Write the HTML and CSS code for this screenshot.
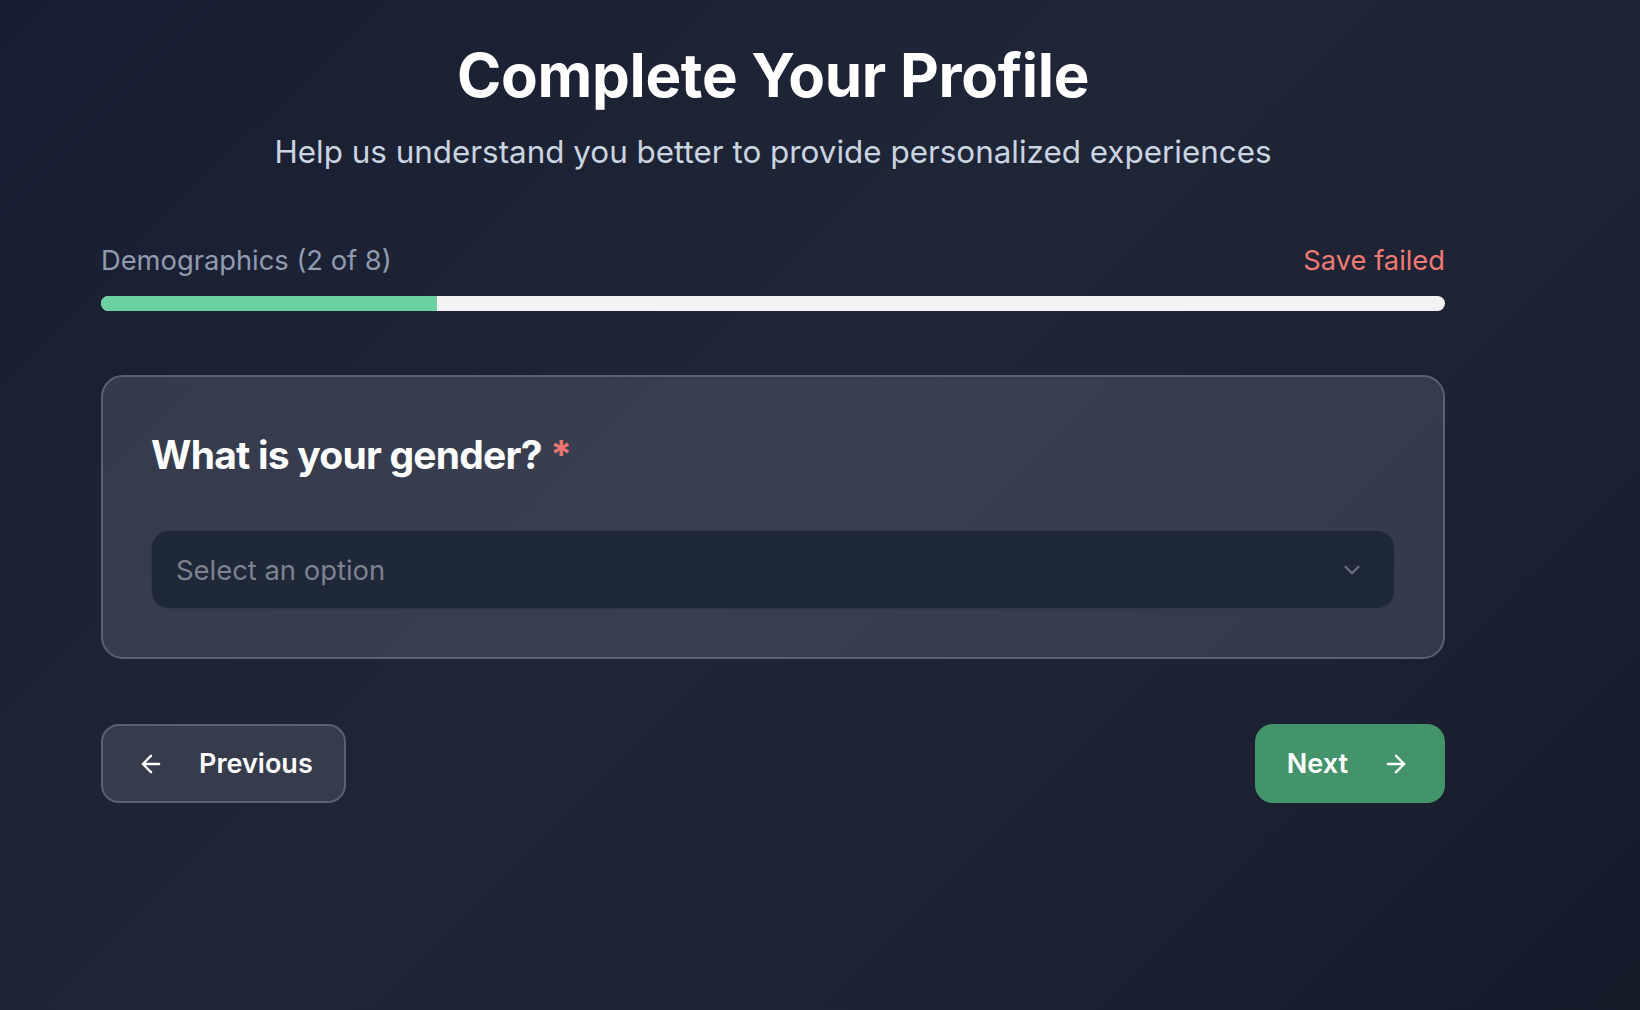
FILE: index.html
```html
<!DOCTYPE html>
<html lang="en">
<head>
<meta charset="utf-8">
<title>Complete Your Profile</title>
<link rel="stylesheet" href="styles.css">
</head>
<body>
<main class="page">
  <header class="hero">
    <h1 class="title">Complete Your Profile</h1>
    <p class="subtitle">Help us understand you better to provide personalized experiences</p>
  </header>

  <section class="progress">
    <div class="progress-row">
      <span class="step">Demographics (2 of 8)</span>
      <span class="status">Save failed</span>
    </div>
    <div class="track"><div class="fill" style="width:25%"></div></div>
  </section>

  <section class="card">
    <h2 class="question">What is your gender? <span class="req">*</span></h2>
    <div class="select">
      <span class="placeholder">Select an option</span>
      <svg class="chev" viewBox="0 0 24 24" width="26" height="26" fill="none" stroke="currentColor" stroke-width="2" stroke-linecap="round" stroke-linejoin="round"><path d="M6 9l6 6 6-6"/></svg>
    </div>
  </section>

  <nav class="actions">
    <button class="btn btn-prev" type="button">
      <svg viewBox="0 0 24 24" width="28" height="28" fill="none" stroke="currentColor" stroke-width="2" stroke-linecap="round" stroke-linejoin="round"><path d="M19 12H5M12 19l-7-7 7-7"/></svg>
      <span>Previous</span>
    </button>
    <button class="btn btn-next" type="button">
      <span>Next</span>
      <svg viewBox="0 0 24 24" width="28" height="28" fill="none" stroke="currentColor" stroke-width="2" stroke-linecap="round" stroke-linejoin="round"><path d="M5 12h14M12 5l7 7-7 7"/></svg>
    </button>
  </nav>
</main>
</body>
</html>
```
FILE: styles.css
```css
* { box-sizing: border-box; }
html, body { margin: 0; height: 100%; }
body {
  font-family: Inter, "Noto Sans", sans-serif;
  background: linear-gradient(135deg, #181e31 0%, #1f2637 45%, #1c2233 75%, #151a29 100%);
  color: #fff;
  min-height: 1010px;
}
.page {
  width: 1344px;
  margin-left: 101px;
  padding-top: 37px;
}
.hero { text-align: center; }
.title {
  margin: 0;
  font-size: 60px;
  line-height: 76px;
  font-weight: 700;
  letter-spacing: -0.005em;
  color: #fff;
}
.subtitle {
  margin: 18px 0 0;
  font-size: 31.4px;
  line-height: 42px;
  color: #cbd5e1;
}
.progress { margin-top: 70px; }
.progress-row {
  display: flex;
  justify-content: space-between;
  align-items: center;
  font-size: 27.3px;
  line-height: 36px;
}
.step { color: #919bb0; }
.status { color: #ef7a72; }
.track {
  margin-top: 17px;
  height: 15px;
  border-radius: 8px;
  background: #f3f3f3;
  overflow: hidden;
}
.fill { height: 100%; background: #6bd19e; }

.card {
  margin-top: 64px;
  border: 2px solid #5a6171;
  border-radius: 22px;
  background: linear-gradient(135deg, #353b4c 0%, #383f50 50%, #343a4b 100%);
  padding: 54px 48px 48px;
}
.question {
  margin: 0;
  font-size: 39px;
  line-height: 48px;
  font-weight: 700;
  letter-spacing: -0.02em;
  color: #fff;
}
.req { color: #e9766e; }
.select {
  margin-top: 51px;
  height: 79px;
  border-radius: 18px;
  background: #1f2839;
  border: 1px solid #2f3849;
  display: flex;
  align-items: center;
  justify-content: space-between;
  padding: 0 29px 0 24px;
}
.placeholder { font-size: 27.4px; color: #7c828f; }
.chev { color: #6b7180; }

.actions {
  margin-top: 65px;
  display: flex;
  justify-content: space-between;
}
.btn {
  height: 79px;
  border-radius: 18px;
  display: flex;
  align-items: center;
  gap: 34px;
  font-family: inherit;
  font-size: 27px;
  font-weight: 600;
  color: #fff;
  cursor: pointer;
}
.btn-prev {
  background: #363c4c;
  border: 2px solid #5b6171;
  padding: 0 31px 0 34px;
}
.btn-next {
  background: #43946b;
  border: none;
  padding: 0 35px 0 32px;
}
```
